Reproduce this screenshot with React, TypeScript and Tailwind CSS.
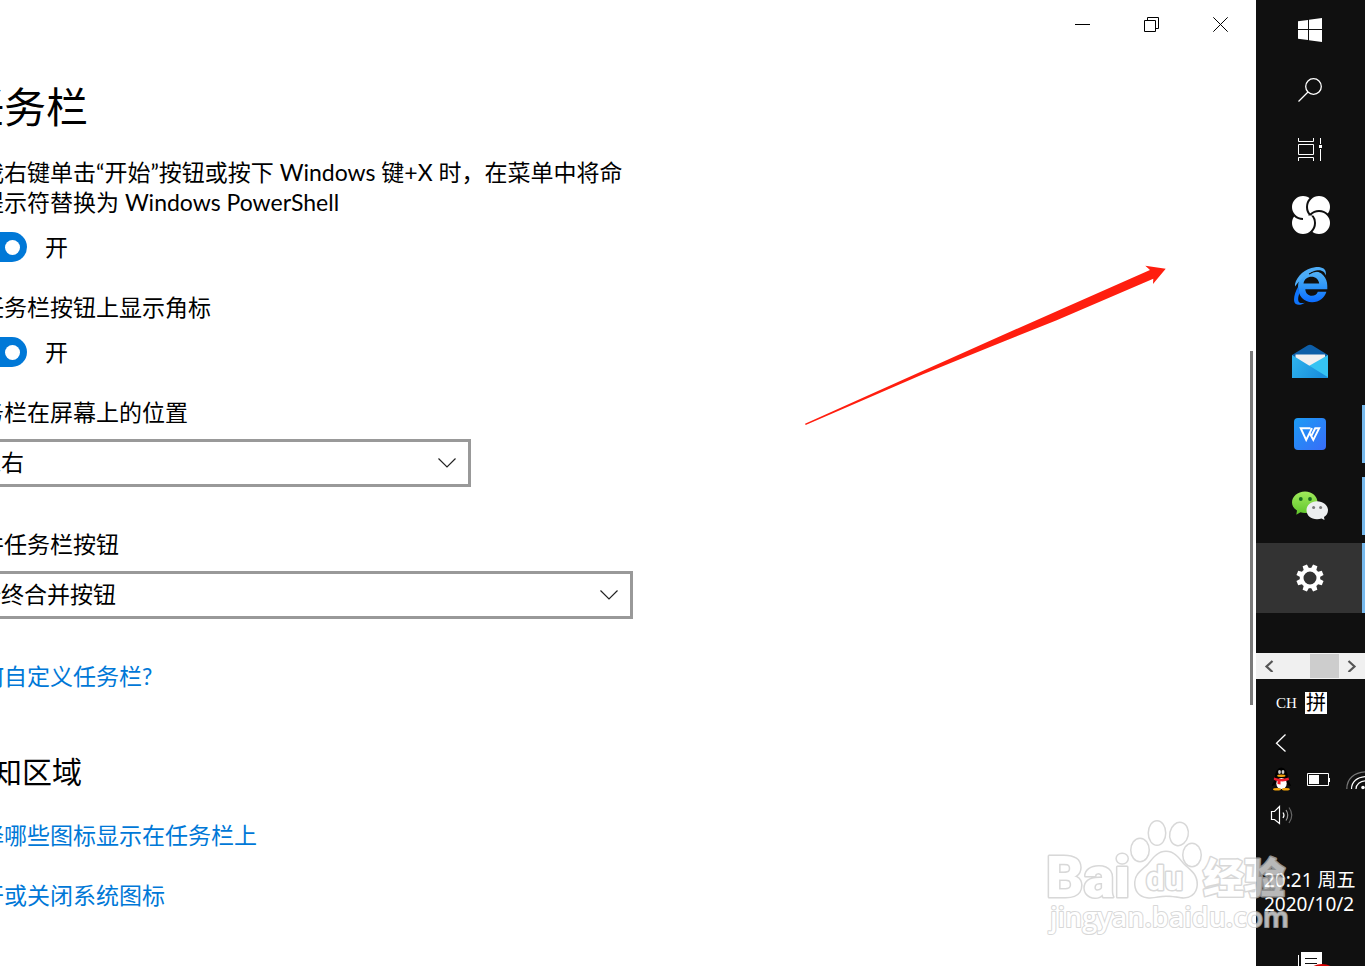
import React from "react";

function Toggle({ id }: { id: string }) {
  return (
    <div className="flex h-[30px] items-center gap-[18px]">
      <input
        id={id}
        type="checkbox"
        role="switch"
        defaultChecked
        className="flex h-[30px] w-[69px] shrink-0 appearance-none items-center justify-end rounded-full bg-[#0078d7] pr-[7px] before:h-[15px] before:w-[15px] before:rounded-full before:bg-white"
      />
      <label htmlFor={id}>开</label>
    </div>
  );
}

function Picker({ id, options, width }: { id: string; options: string[]; width: string }) {
  return (
    <div className={`relative h-12 ${width}`}>
      <select
        id={id}
        className="h-full w-full appearance-none border-[3px] border-[#999] bg-white pb-[2px] pl-[17px] pr-10 text-black"
      >
        {options.map((o) => (
          <option key={o}>{o}</option>
        ))}
      </select>
      <svg className="pointer-events-none absolute right-[14px] top-[18px]" width="20" height="12" viewBox="0 0 20 12">
        <path d="M1.5 1.5 L10 10 L18.5 1.5" fill="none" stroke="#222" strokeWidth="1.2" />
      </svg>
    </div>
  );
}

function WindowButtons() {
  const cell = "flex h-12 w-[69px] items-center justify-center";
  return (
    <header className="flex justify-end pr-px">
      <button type="button" aria-label="最小化" className={cell}>
        <svg width="15" height="15" viewBox="0 0 15 15">
          <path d="M0 7.5H15" stroke="#000" />
        </svg>
      </button>
      <button type="button" aria-label="还原" className={cell}>
        <svg width="15" height="15" viewBox="0 0 15 15" fill="none" stroke="#000">
          <path d="M0.5 3.5H11.5V14.5H0.5Z M3.5 3.5V0.5H14.5V11.5H11.5" />
        </svg>
      </button>
      <button type="button" aria-label="关闭" className={cell}>
        <svg width="15" height="15" viewBox="0 0 15 15" stroke="#000" strokeWidth="1">
          <path d="M0.3 0.3L14.7 14.7M14.7 0.3L0.3 14.7" />
        </svg>
      </button>
    </header>
  );
}

function PinwheelIcon() {
  const s = { fill: "#fff", stroke: "#101010", strokeWidth: 2 };
  return (
    <svg width="40" height="40" viewBox="0 0 40 40" className="translate-x-px">
      <defs>
        <clipPath id="lower">
          <rect x="12" y="20.500" width="28" height="19.500" />
        </clipPath>
      </defs>
      <circle cx="12" cy="28" r="12" {...s} />
      <circle cx="12" cy="12" r="12" {...s} />
      <circle cx="28" cy="12" r="12" {...s} />
      <circle cx="28" cy="28" r="12" {...s} />
      <circle cx="12" cy="28" r="12" clipPath="url(#lower)" {...s} />
    </svg>
  );
}

function BrowserIcon() {
  return (
    <svg width="34" height="38" viewBox="0 0 34 38" className="translate-x-px">
      <defs>
        <linearGradient id="ie" x1="0" y1="0" x2="0" y2="1">
          <stop offset="0" stopColor="#55b4f7" />
          <stop offset="0.5" stopColor="#2f96f8" />
          <stop offset="1" stopColor="#0a6cff" />
        </linearGradient>
      </defs>
      <path
        fill="url(#ie)"
        fillRule="evenodd"
        d="M33.300 22.3H11.3C11.6 26.5 14.3 28.8 17.8 28.8C20.8 28.8 23 27.5 23.8 24.8H32.4C30.5 31.2 25.3 35.2 18.2 35.2C10 35.2 4 28.8 4 20C4 11 10.5 3.8 18.2 3.8C27.5 3.8 33.3 10.5 33.3 19ZM9.500 16.4H25.2C24.6 12.4 21.5 9.8 17.5 9.8C13.5 9.8 10.4 12 9.500 16.4Z"
      />
      <path
        fill="none"
        stroke="#101010"
        strokeWidth="1.2"
        d="M15 7C18 5 21 4.200 23 4.200C26 4 28 4.600 29.500 6.500"
      />
      <path
        fill="#4dacf7"
        d="M1 17C3 9 11 1.2 21 0.2C29 -0.5 33 2.5 31.6 8.6C31 5 28 2.4 22 3.6C14 5.2 7 11.5 1 19.5Z"
      />
      <path
        fill="#0f74fb"
        d="M4 20C0.500 26 -1.5 34 1.5 36.8C4 38.8 8 37.6 11 35.8C7 36.6 4.500 36 4.200 33C4 30.8 4.500 28.5 5.500 26.5Z"
      />
    </svg>
  );
}

function MailIcon() {
  return (
    <svg width="36" height="34" viewBox="0 0 36 34">
      <defs>
        <linearGradient id="mail" x1="0" y1="0" x2="1" y2="0.4">
          <stop offset="0" stopColor="#2fb4ee" />
          <stop offset="1" stopColor="#1a8fdc" />
        </linearGradient>
      </defs>
      <path d="M0 11L15.5 1.6Q18 0 20.5 1.6L36 11V22H0Z" fill="#0d5ea8" />
      <path d="M3.500 10.500H33V20L18 24L3.500 16Z" fill="#f1eff0" />
      <path d="M36 11V34H16V22.5Z" fill="#35c3f3" />
      <path d="M0 11L36 33.2V34H0Z" fill="url(#mail)" />
    </svg>
  );
}

function WriterIcon() {
  return (
    <svg width="32" height="32" viewBox="0 0 32 32">
      <defs>
        <linearGradient id="wps" x1="0" y1="0" x2="1" y2="1">
          <stop offset="0" stopColor="#1b9cf5" />
          <stop offset="1" stopColor="#396cf8" />
        </linearGradient>
      </defs>
      <rect width="32" height="32" rx="4" fill="url(#wps)" />
      <path
        d="M16.500 10.200H6.700L12.200 22L18 10.200M15.800 15.500L19.300 22L25.200 10.200H21.200L17.500 17.500"
        fill="none"
        stroke="#fff"
        strokeWidth="1.900"
      />
    </svg>
  );
}

function ChatIcon() {
  return (
    <svg width="36" height="30" viewBox="0 0 36 30">
      <defs>
        <linearGradient id="chat" x1="0" y1="0" x2="0" y2="1">
          <stop offset="0" stopColor="#a0ea5b" />
          <stop offset="1" stopColor="#5fc52b" />
        </linearGradient>
      </defs>
      <path d="M13 0.5C20.500 0.500 25.500 5.500 25.500 11.500C25.500 18 20 22 13 22Q10.500 22 8.500 21.300L4.300 23.700L5 19.500C2 17.500 0 14.800 0 11.500C0 5.500 5.500 0.500 13 0.500Z" fill="url(#chat)" />
      <circle cx="8.8" cy="8" r="1.900" fill="#176c1f" />
      <circle cx="18" cy="8" r="1.900" fill="#176c1f" />
      <path d="M25 10.300C31 10.300 36 14 36 19.300C36 22.300 34.500 24.500 32 26L32.500 29L29.500 27.600Q27.500 28.300 25 28.300C19 28.300 14.500 24.500 14.500 19.300C14.500 14 19 10.300 25 10.300Z" fill="#eceeef" />
      <circle cx="21.600" cy="16.500" r="1.500" fill="#777" />
      <circle cx="28.600" cy="16.500" r="1.500" fill="#777" />
    </svg>
  );
}

function GearIcon() {
  return (
    <svg width="28" height="28" viewBox="0 0 28 28">
      <circle cx="14" cy="14" r="8.400" fill="none" stroke="#fff" strokeWidth="3.800" />
      {[22.5, 67.5, 112.5, 157.5, 202.5, 247.5, 292.5, 337.5].map((a) => (
        <path key={a} d="M11 6L11.700 0.300H16.300L17 6Z" fill="#fff" transform={`rotate(${a} 14 14)`} />
      ))}
    </svg>
  );
}

function TaskbarButton({ label, active, running, className = "h-[70px]", children }: {
  label: string; active?: boolean; running?: boolean; className?: string; children: React.ReactNode;
}) {
  return (
    <button
      type="button"
      aria-label={label}
      className={`relative flex w-full shrink-0 items-center justify-center pr-px ${className} ${active ? "bg-[#333]" : ""}`}
    >
      {children}
      {running && <span className={`absolute right-0 w-[3px] bg-[#76b9ed] ${active ? "inset-y-0" : "inset-y-[6px]"}`} />}
    </button>
  );
}

function Tray() {
  return (
    <div className="flex flex-col text-white">
      <div className="mt-[13px] flex h-[22px] items-center gap-2 pl-5">
        <span className="w-[21px] font-['Liberation_Serif',serif] text-[15px] leading-[22px]">CH</span>
        <span className="flex h-[22px] w-[22px] items-center justify-center bg-white text-[20px] leading-[22px] text-black">拼</span>
      </div>
      <button type="button" aria-label="显示隐藏的图标" className="ml-[19px] mt-[19px] h-5 w-3">
        <svg width="12" height="20" viewBox="0 0 12 20">
          <path d="M10.500 1.500L1.500 10.200L10.500 18.500" fill="none" stroke="#fff" strokeWidth="1.300" />
        </svg>
      </button>
      <div className="mt-[14px] flex h-6 items-start overflow-hidden pl-[15px]">
        <svg className="shrink-0" width="20" height="24" viewBox="0 0 20 24">
          <ellipse cx="10.300" cy="11.500" rx="6.800" ry="11" fill="#000" />
          <path d="M4.500 12L1.200 18.500L3.500 17.500ZM16 12L19.500 18.500L17 17.500Z" fill="#000" stroke="#000" />
          <ellipse cx="10.500" cy="16.500" rx="5.200" ry="5.500" fill="#fff" />
          <ellipse cx="8.500" cy="5" rx="1.400" ry="1.900" fill="#ccc" />
          <ellipse cx="12" cy="5" rx="1.400" ry="1.900" fill="#ccc" />
          <ellipse cx="10.300" cy="8.700" rx="4.200" ry="1.200" fill="#f2a30b" />
          <path d="M3 10.500Q10 13.300 17.500 10.500L18 13Q14 14.800 9.500 14.300V17.500L6.500 17V14Q4 13.600 2.800 12.800Z" fill="#ef1d2d" />
          <ellipse cx="6" cy="22.200" rx="4" ry="1.300" fill="#f2a30b" />
          <ellipse cx="14.800" cy="22.200" rx="4" ry="1.300" fill="#f2a30b" />
        </svg>
        <svg className="ml-4 mt-[6px] shrink-0" width="24" height="14" viewBox="0 0 24 14">
          <path d="M0.500 0.500H21.500V12.500H0.500Z" fill="none" stroke="#fff" />
          <path d="M2 2H12V11H2ZM22 5H23V9H22Z" fill="#fff" />
        </svg>
        <svg className="ml-[15px] mt-1 shrink-0" width="22" height="20" viewBox="0 0 22 20" fill="none" stroke="#fff" strokeWidth="1.200">
          <path d="M0.800 18C0.800 8 8 1 20 0.800" stroke="#777" />
          <path d="M5.500 18C5.500 11 11 5.800 20 5.500M10 18C10 13.500 14 10 20 9.800" />
          <circle cx="17" cy="16.500" r="1.200" fill="#fff" />
        </svg>
      </div>
      <button type="button" aria-label="音量" className="ml-[14px] mt-[14px] h-5 w-6">
        <svg width="24" height="20" viewBox="0 0 24 20" fill="none" stroke="#fff" strokeWidth="1.200">
          <path d="M1.500 6.500H4.500L9.500 1.500V18.500L4.500 14.500H1.500Z" />
          <path d="M13 7.500Q15 10 13 13" />
          <path d="M16 5Q19.500 10 16 15.500" stroke="#999" />
          <path d="M19 2.500Q24.500 10 19 18" stroke="#666" />
        </svg>
      </button>
      <div className="mt-[43px] whitespace-nowrap pl-2 text-[19px] leading-6">
        <div>20:21 周五</div>
        <div>2020/10/2</div>
      </div>
    </div>
  );
}

function Taskbar() {
  return (
    <aside className="flex w-[109px] shrink-0 flex-col overflow-hidden bg-[#101010] font-['Noto_Sans','Noto_Sans_CJK_SC',sans-serif]">
      <TaskbarButton label="开始" className="h-[60px]">
        <svg width="24" height="24" viewBox="0 0 24 24" fill="#fff">
          <path d="M0 3.300L10 1.900V11H0ZM11 1.700L24 0V11H11ZM0 12H10V22.100L0 20.700ZM11 12H24V24L11 22.300Z" />
        </svg>
      </TaskbarButton>
      <TaskbarButton label="搜索" className="h-[60px]">
        <svg width="24" height="24" viewBox="0 0 24 24" fill="none" stroke="#fff" strokeWidth="1.300">
          <circle cx="15.500" cy="8.500" r="7.800" />
          <path d="M0.500 23.500L10 14" />
        </svg>
      </TaskbarButton>
      <TaskbarButton label="任务视图" className="h-[60px]">
        <svg width="24" height="24" viewBox="0 0 24 24" fill="none" stroke="#fff">
          <path d="M0.500 0V3.500H15.500V0M0.500 6.500H15.500V16.500H0.500ZM0.500 23V19.500H15.500V23M22.500 0V6M22.500 11V23" />
          <path d="M21 7H24V10H21Z" fill="#fff" stroke="none" />
        </svg>
      </TaskbarButton>
      <TaskbarButton label="输入法"><PinwheelIcon /></TaskbarButton>
      <TaskbarButton label="Internet Explorer" className="mt-px h-[70px]"><BrowserIcon /></TaskbarButton>
      <TaskbarButton label="邮件" className="mt-[5px] h-[70px]"><MailIcon /></TaskbarButton>
      <TaskbarButton label="WPS" running className="mt-[3px] h-[70px]"><WriterIcon /></TaskbarButton>
      <TaskbarButton label="微信" running className="mt-[2px] h-[70px]"><ChatIcon /></TaskbarButton>
      <TaskbarButton label="设置" running active className="mt-[2px] h-[70px]"><GearIcon /></TaskbarButton>
      <div className="mt-10 flex h-[26px] shrink-0 items-center justify-between bg-[#f0f0f0] py-px">
        <button type="button" aria-label="向左滚动" className="flex h-6 w-[26px] items-center justify-center">
          <svg width="10" height="12" viewBox="0 0 10 12">
            <path d="M8.500 1L2.500 6.500L8.500 12" fill="none" stroke="#555" strokeWidth="2.200" />
          </svg>
        </button>
        <span className="ml-auto h-6 w-[29px] bg-[#cdcdcd]" />
        <button type="button" aria-label="向右滚动" className="flex h-6 w-[26px] items-center justify-center">
          <svg width="10" height="12" viewBox="0 0 10 12">
            <path d="M1.500 1L7.500 6.500L1.500 12" fill="none" stroke="#555" strokeWidth="2.200" />
          </svg>
        </button>
      </div>
      <Tray />
      <button type="button" aria-label="通知" className="ml-[42px] mt-auto h-[14px] w-9 shrink-0">
        <svg width="36" height="14" viewBox="0 0 36 14">
          <path d="M0 3H1V14H0ZM3 0H24V14H3Z" fill="#fff" />
          <path d="M7 6.500H19M7 11.500H19" stroke="#101010" />
          <ellipse cx="24" cy="22" rx="14" ry="10" fill="#d90000" />
        </svg>
      </button>
    </aside>
  );
}

function Watermark() {
  return (
    <svg
      className="pointer-events-none absolute bottom-[26px] right-[65px] font-['Roboto','Noto_Sans_CJK_SC',sans-serif] opacity-70"
      width="260"
      height="125"
      viewBox="0 0 260 125"
      fill="#fff"
      stroke="#c8c8c8"
      strokeWidth="3"
      strokeLinejoin="round"
      paintOrder="stroke"
    >
      <text x="6" y="82" fontSize="58" fontWeight="900">Bai</text>
      <ellipse cx="100" cy="35" rx="8.500" ry="11" />
      <ellipse cx="117" cy="18" rx="8" ry="11.500" />
      <ellipse cx="139" cy="19" rx="8.500" ry="11" transform="rotate(12 139 19)" />
      <ellipse cx="152" cy="40" rx="8.500" ry="11" />
      <path d="M126 37C134 37 138 43 143 49C149 55 157 59 156.500 70C156 79 149 83 141 82C135 81 131 80.500 126 80.500C119 80.500 114 83 107 82C99 81 95 75 95.500 67C96 58 104 55 109 49C114 43 118 37 126 37Z" />
      <text x="106" y="75" fontSize="33" fontWeight="700">du</text>
      <text x="163" y="78" fontSize="41" fontWeight="900">经验</text>
      <text x="10" y="112" fontSize="27" fontWeight="600" strokeWidth="2" className="font-['Open_Sans',sans-serif]">jingyan.baidu.com</text>
    </svg>
  );
}

export default function App() {
  return (
    <div
      lang="zh-CN"
      className="relative flex h-screen overflow-hidden bg-white font-['Lato','Noto_Sans_CJK_SC',sans-serif] text-[23px] leading-[30px] text-black"
    >
      <main className="relative min-w-0 flex-1 overflow-hidden">
        <WindowButtons />
        <div className="-ml-[42px] mt-[29px] whitespace-nowrap">
          <h1 className="pl-1 text-[42px] leading-[60px]">任务栏</h1>
          <p className="mt-5">
            当我右键单击“开始”按钮或按下 Windows 键+X 时，在菜单中将命
            <br />
            令提示符替换为 Windows PowerShell
          </p>
          <div className="mt-[15px]"><Toggle id="powershell" /></div>
          <p className="mt-[30px]">在任务栏按钮上显示角标</p>
          <div className="mt-[15px]"><Toggle id="badges" /></div>
          <label htmlFor="position" className="mb-3 mt-[30px] block">任务栏在屏幕上的位置</label>
          <Picker id="position" width="w-[513px]" options={["靠右", "靠左", "顶部", "底部"]} />
          <label htmlFor="combine" className="mb-3 mt-[42px] block">合并任务栏按钮</label>
          <Picker id="combine" width="w-[675px]" options={["始终合并按钮", "任务栏已满时", "从不"]} />
          <a href="#customize" className="mt-[42px] block w-fit text-[#0078d7]">如何自定义任务栏?</a>
          <h2 className="mt-[60px] pl-1 text-[30px] leading-10">通知区域</h2>
          <a href="#icons" className="mt-[29px] block w-fit text-[#0078d7]">选择哪些图标显示在任务栏上</a>
          <a href="#system" className="mt-[30px] block w-fit text-[#0078d7]">打开或关闭系统图标</a>
        </div>
        <div className="absolute right-[3px] top-[351px] h-[354px] w-[3px] bg-[#7a7a7a]" />
        <svg className="pointer-events-none absolute right-[86px] top-[260px]" width="370" height="170" viewBox="0 0 370 170">
          <path d="M5 163.700L123 110.700L190 80.700L256.700 51.300L350 10L345.300 5.700L365.700 8.700L353 24L353.300 18.700L256.700 60.300L190 87L123 114.300L5.700 165Z" fill="#ff1e0f" />
        </svg>
      </main>
      <Taskbar />
      <Watermark />
    </div>
  );
}
